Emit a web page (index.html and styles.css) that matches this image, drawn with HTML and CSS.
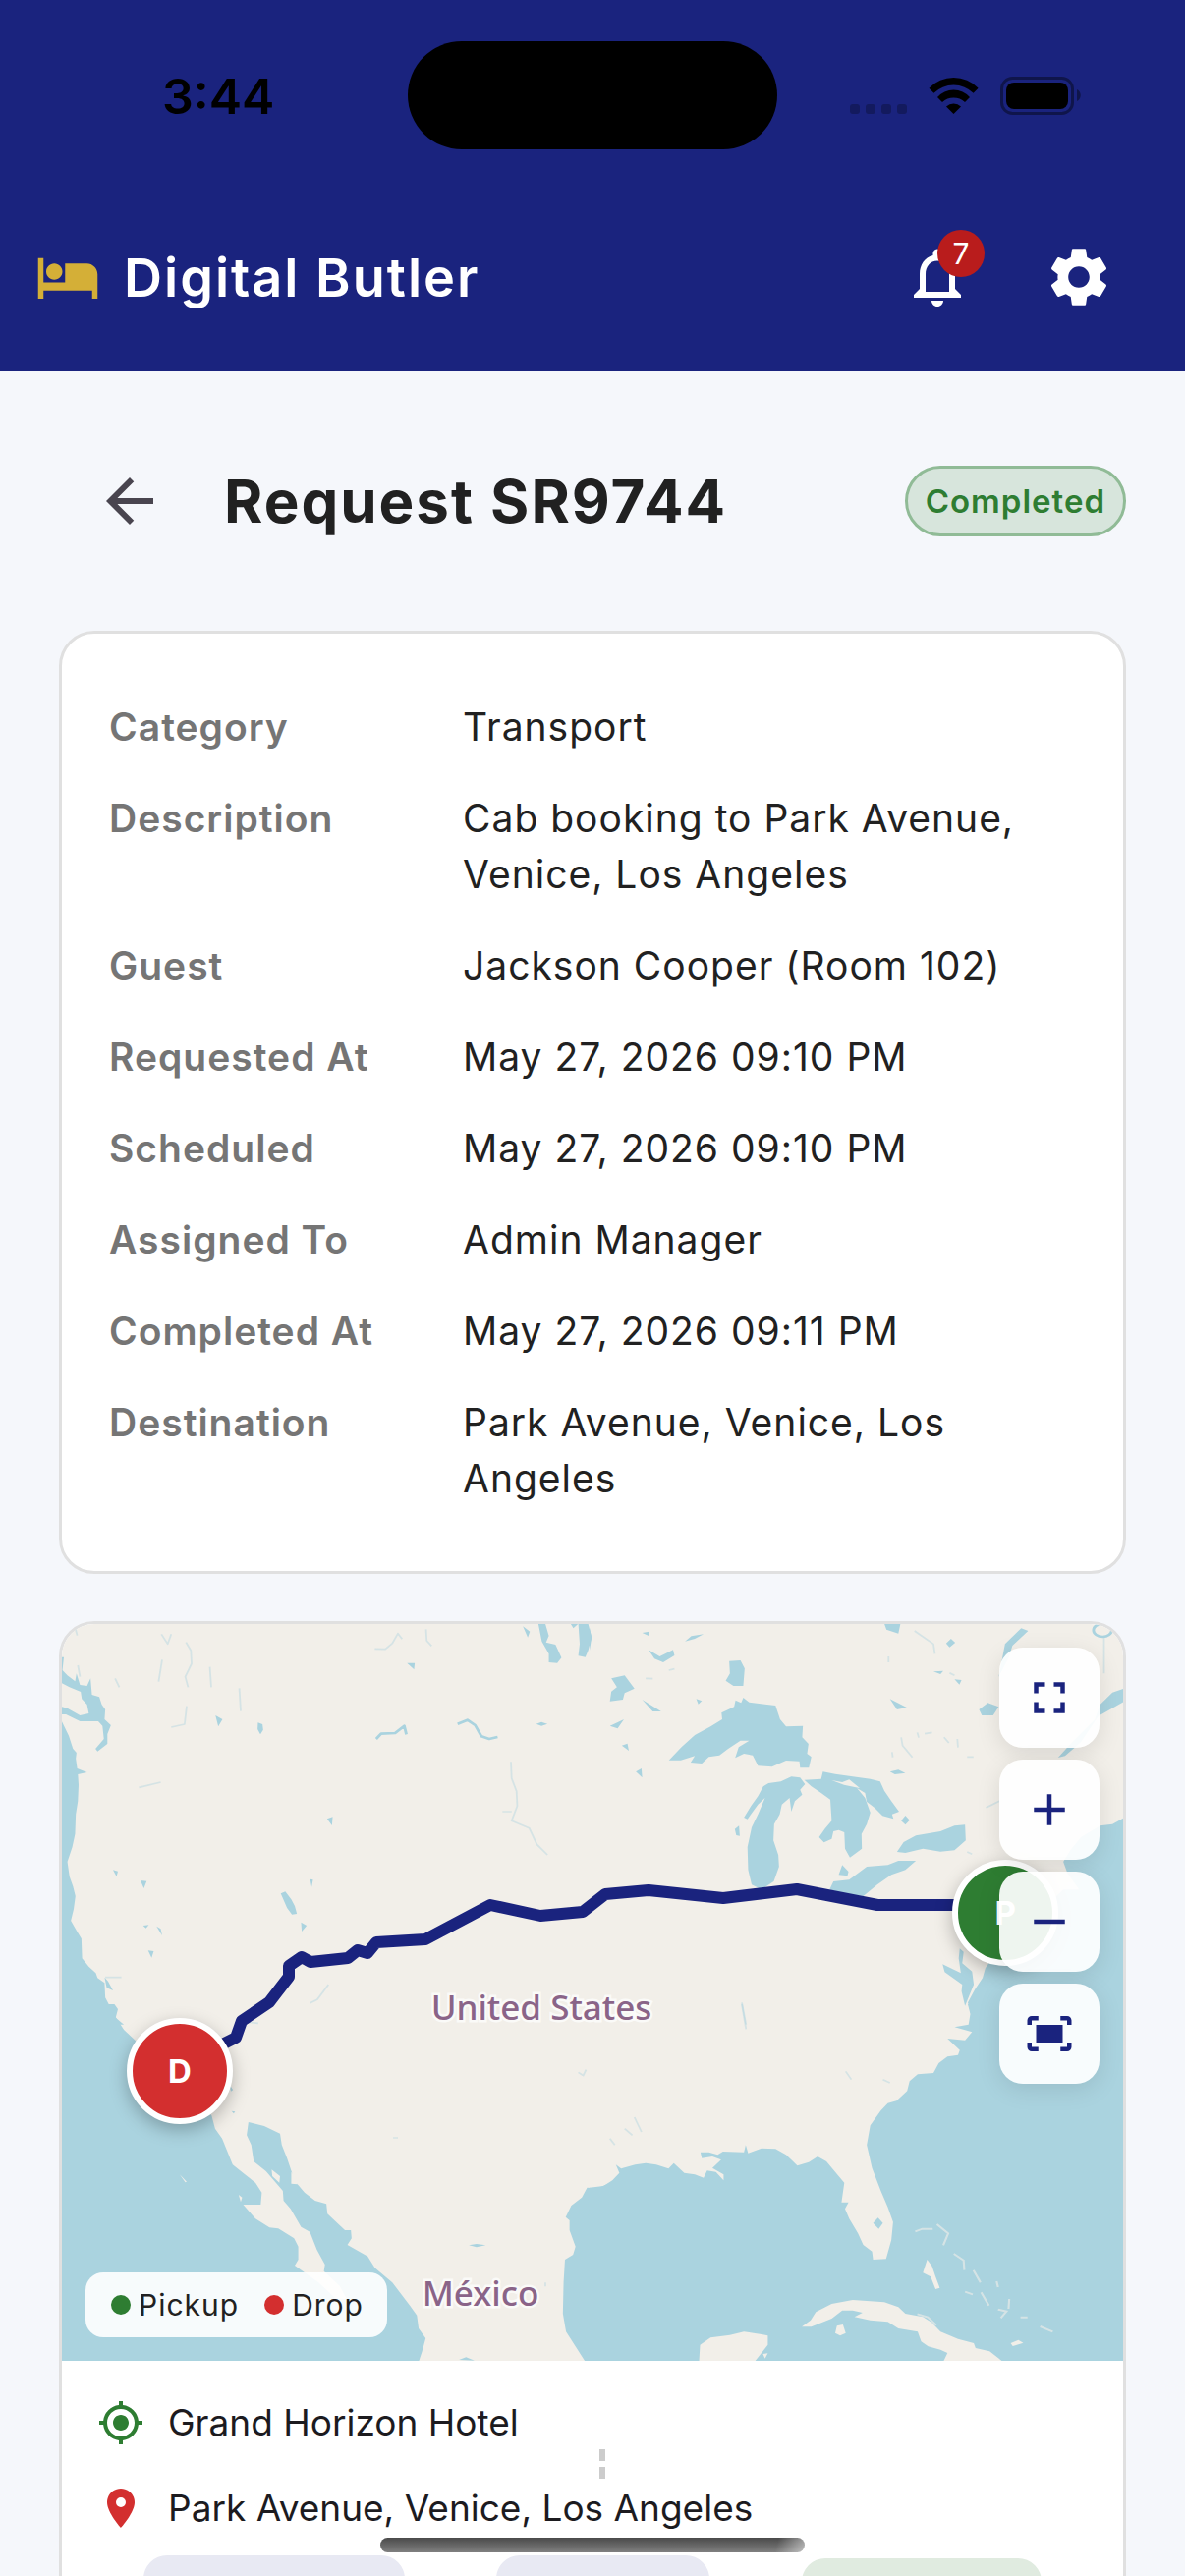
FILE: index.html
```html
<!DOCTYPE html>
<html lang="en">
<head>
  <meta charset="UTF-8" />
  <meta name="viewport" content="width=device-width, initial-scale=1" />
  <title>Digital Butler - Request SR9744</title>
  <link rel="stylesheet" href="styles.css">
</head>
<body>
<header class="top">
  <div class="status-bar">
    <span class="clock">3:44</span>
    <div class="island"></div>
    <svg class="status-icons" viewBox="0 0 236 40" aria-hidden="true">
      <g opacity=".25">
        <rect x="0" y="28" width="10" height="10" rx="3"/>
        <rect x="16" y="28" width="10" height="10" rx="3"/>
        <rect x="32" y="28" width="10" height="10" rx="3"/>
        <rect x="48" y="28" width="10" height="10" rx="3"/>
      </g>
      <path d="M80.5 11.7A34.5 34.5 0 0 1 130.6 11.7L125.6 16.7A29 29 0 0 0 85.4 16.7Z"/>
      <path d="M89 21A22 22 0 0 1 122 21L117 26A17 17 0 0 0 94 26Z"/>
      <path d="M98 30.5A11 11 0 0 1 113 30.5L105.5 38Z"/>
      <rect x="154.500" y="1.500" width="72" height="36" rx="11" fill="none" stroke="#000" stroke-width="3" opacity=".4"/>
      <rect x="159" y="6" width="63" height="27" rx="8"/>
      <path d="M231 13c5 2 5 10 0 12z" opacity=".4"/>
    </svg>
  </div>
  <div class="app-bar">
    <svg class="icon-bed" viewBox="0 0 24 24" aria-hidden="true"><path d="M7 13c1.660 0 3-1.340 3-3S8.660 7 7 7s-3 1.340-3 3 1.340 3 3 3zm12-6h-8v7H3V5H1v15h2v-3h18v3h2v-9c0-2.210-1.790-4-4-4z"/></svg>
    <div class="app-name">Digital Butler</div>
    <button type="button" class="icon-btn" aria-label="Notifications">
      <svg class="icon" viewBox="0 0 24 24"><path d="M12 22c1.100 0 2-.9 2-2h-4c0 1.100.9 2 2 2zm6-6v-5c0-3.070-1.630-5.640-4.500-6.320V4c0-.83-.67-1.500-1.500-1.500s-1.500.67-1.500 1.500v.68C7.640 5.360 6 7.920 6 11v5l-2 2v1h16v-1l-2-2zm-2 1H8v-6c0-2.480 1.510-4.500 4-4.500s4 2.020 4 4.500v6z"/></svg>
      <span class="badge">7</span>
    </button>
    <button type="button" class="icon-btn" aria-label="Settings">
      <svg class="icon" viewBox="0 0 24 24"><path d="M19.140,12.940c0.040-0.300,0.060-0.610,0.060-0.940c0-0.320-0.020-0.640-0.070-0.940l2.030-1.580c0.180-0.140,0.230-0.410,0.120-0.610l-1.920-3.320c-0.120-0.220-0.370-0.290-0.590-0.220l-2.390,0.960c-0.500-0.380-1.030-0.700-1.620-0.940L14.400,2.810c-0.040-0.240-0.240-0.410-0.480-0.410h-3.840c-0.240,0-0.430,0.170-0.470,0.410L9.250,5.350C8.660,5.590,8.120,5.920,7.630,6.290L5.240,5.330c-0.220-0.080-0.470,0-0.590,0.220L2.740,8.870C2.620,9.080,2.660,9.340,2.860,9.480l2.030,1.580C4.840,11.360,4.800,11.690,4.800,12s0.020,0.640,0.070,0.940l-2.030,1.580c-0.180,0.140-0.230,0.410-0.120,0.610l1.920,3.320c0.120,0.220,0.370,0.290,0.590,0.220l2.390-0.960c0.500,0.380,1.030,0.700,1.620,0.940l0.360,2.540c0.050,0.240,0.240,0.410,0.480,0.410h3.840c0.240,0,0.440-0.170,0.470-0.410l0.360-2.540c0.590-0.240,1.130-0.560,1.620-0.940l2.390,0.960c0.220,0.080,0.470,0,0.590-0.220l1.920-3.320c0.120-0.220,0.070-0.470-0.120-0.610L19.140,12.940z M12,15.600c-1.980,0-3.600-1.620-3.600-3.600s1.620-3.600,3.600-3.600s3.600,1.620,3.600,3.600S13.980,15.600,12,15.600z"/></svg>
    </button>
  </div>
</header>

<main class="page">
  <div class="page-head">
    <button type="button" class="back-btn" aria-label="Back">
      <svg class="icon" viewBox="0 0 24 24"><path d="M20 11H7.830l5.590-5.590L12 4l-8 8 8 8 1.410-1.410L7.830 13H20v-2z"/></svg>
    </button>
    <h1 class="page-title">Request SR9744</h1>
    <span class="status-pill">Completed</span>
  </div>

  <!-- Request details -->
  <dl class="card details">
    <div class="detail-row"><dt>Category</dt><dd>Transport</dd></div>
    <div class="detail-row"><dt>Description</dt><dd>Cab booking to Park Avenue, Venice, Los Angeles</dd></div>
    <div class="detail-row"><dt>Guest</dt><dd>Jackson Cooper (Room 102)</dd></div>
    <div class="detail-row"><dt>Requested At</dt><dd>May 27, 2026 09:10 PM</dd></div>
    <div class="detail-row"><dt>Scheduled</dt><dd>May 27, 2026 09:10 PM</dd></div>
    <div class="detail-row"><dt>Assigned To</dt><dd>Admin Manager</dd></div>
    <div class="detail-row"><dt>Completed At</dt><dd>May 27, 2026 09:11 PM</dd></div>
    <div class="detail-row"><dt>Destination</dt><dd>Park Avenue, Venice, Los Angeles</dd></div>
  </dl>

  <!-- Trip map -->
  <section class="card trip">
    <div class="map">
      <svg class="map-art" viewBox="0 0 1080 750" role="img" aria-label="Route map">
        <!-- north west -->
        <g transform="translate(-3 -13) scale(.35714 .33333)">
          <path class="water" d="M0 318L12 345 28 380 40 420 50 432 48 450 52 480 80 492 54 498 56 530 54 580 48 620 46 680 38 720 24 765 30 810 40 840 47 870 42 910 34 945 50 975 64 1000 66 1060 85 1085 105 1105 110 1120 130 1135 132 1180 142 1200 165 1215 160 1240 185 1262H0Z"/>
          <path class="water" d="M0 140L14 140 10 180 24 196 46 214 50 190 60 225 80 228 90 205 94 255 115 262 122 285 132 300 130 330 148 348 138 375 138 405 110 428 104 420 128 390 124 350 112 336 60 336 20 315 0 315V290L24 296 60 318 85 312 80 285 65 268 62 246 30 232 0 215Z"/>
          <path class="water" d="M632 862L645 856 662 880 672 900 678 924 664 926 650 906ZM567 340L580 345 582 362 574 376 566 360ZM446 318L466 330 454 352ZM232 822L250 824 242 846ZM254 1036L270 1038 264 1058ZM278 962L290 970 294 990ZM764 634L780 628 778 654ZM716 818L724 820 720 842ZM154 790L168 794 164 810ZM690 950L706 960 692 978ZM992 158L1014 158 1012 178ZM1360 344L1375 338 1392 344 1375 350ZM240 960L256 958 248 968ZM130 1118L140 1130 154 1158 136 1150Z"/>
          <path class="water" d="M1366 38H1386L1396 75 1388 95 1415 102 1432 142 1420 158 1396 156 1396 130 1376 92ZM1480 38H1508L1518 80 1508 120 1500 140 1480 136 1484 100ZM1322 46L1342 62 1336 80ZM1458 38H1480L1466 52Z"/>
          <path class="creek" d="M904 390L918 374 958 372 984 350 990 376M1136 344L1164 332 1186 348 1204 382 1226 390 1250 384"/>
          <path class="creek faint" d="M1288 460L1290 510 1304 550 1306 595 1290 640 1340 662 1362 712 1392 744M1264 612H1290M362 95L376 120 378 160 360 200 368 232M430 170L434 232M292 70L310 100 320 70M294 148L284 215M514 235L518 305M364 290L358 345 320 354M160 205L172 232M900 115L930 116 950 98 966 68 978 85M1046 55L1048 90 1062 106M228 538L290 522M716 1196L736 1186 754 1160 768 1140M54 165L60 200M132 1118H178M46 50L52 74"/>
        </g>
        <!-- north east -->
        <g transform="translate(537 -13) scale(.35714 .33333)">
          <path class="water" d="M226 455L262 415 300 378 345 352 378 330 376 310 412 292 416 272 432 280 438 264 455 278 500 284 530 288 543 330 560 352 608 350 606 385 624 405 620 435 632 445 625 478 600 478 598 458 560 456 520 475 480 472 465 440 440 435 415 448 425 415 455 395 430 395 395 420 370 440 340 445 320 465 288 462 300 442 260 455Z"/>
          <path class="water" d="M600 508L575 505 545 520 510 525 495 535 480 565 460 595 440 630 450 635 480 590 500 570 480 620 462 660 450 720 452 790 462 835 490 850 525 825 540 780 538 745 524 700 526 650 542 620 548 590 570 570 575 612 585 580 606 560 600 545 614 528Z"/>
          <path class="water" d="M612 515L660 512 665 490 700 497 760 506 800 512 828 520 840 548 860 580 882 612 862 620 866 634 835 625 812 600 790 582 785 555 762 540 785 570 800 615 790 650 775 680 776 725 742 752 728 725 726 675 710 668 695 672 690 695 668 706 654 690 670 665 690 640 686 575 660 555 632 535Z"/>
          <path class="land" d="M690 516L720 522 740 514 770 540 752 536 725 530Z"/>
          <path class="water" d="M684 850L695 825 740 820 790 780 850 775 880 762 930 762 900 790 860 805 820 835 780 870 730 865ZM710 805L720 775 738 795 735 808ZM876 735L895 705 930 685 1000 672 1040 655 1070 652 1072 700 1040 730 1000 734 950 725 900 738ZM398 152L430 150 442 175 438 228 410 228 388 212 400 190ZM888 640L900 624 912 638 900 652ZM414 665L426 655 428 686 418 684Z"/>
          <path class="water" d="M840 38H886L880 68 846 56ZM168 118L200 138 238 118 242 135 210 156 185 145ZM62 205L100 196 128 236 100 250 95 270 58 275 62 245 78 232ZM150 270L204 306 180 306ZM58 350L98 330 80 358ZM132 490L148 480 150 508ZM304 268L320 274 310 284ZM856 268L904 294 876 300ZM856 490L880 484 900 494 870 498ZM92 410L108 404 112 426ZM1016 98L1030 84 1042 96 1026 110ZM1110 300L1135 280 1166 292 1150 318 1118 318ZM980 184L1008 182 1000 192ZM1040 208L1060 210 1054 224ZM0 50L6 80 0 120ZM150 66L170 62 170 76ZM272 92L290 76 325 70 300 84Z"/>
          <path class="water" d="M1525 235L1490 248 1455 285 1440 330 1375 400 1335 447 1355 442 1400 400 1450 320 1525 275ZM1230 52L1250 60 1205 105 1195 140 1166 200 1184 100Z"/>
          <path class="water" d="M1525 630L1490 650 1455 655 1400 690 1370 730 1350 765 1362 800 1395 850 1350 850 1330 870 1200 980 1128 1090 1120 1120 1098 1155 1078 1195 1095 1262H1525Z"/>
          <path class="water" d="M1055 1030L1066 1040 1062 1075 1090 1100 1095 1140 1070 1205 1060 1160 1062 1140 1012 1102 1006 1078 1058 1105 1052 1060Z"/>
          <path class="creek faint" d="M862 430L864 446M888 385L892 410 920 446M934 370L938 386M955 374L976 370M1010 385L1024 402M1048 390L1050 416M1076 445H1094M1130 600L1168 580M1026 188L1040 196M926 60L980 100 984 130M852 138V156M1076 735L1090 742M434 1195L446 1262M160 205L180 206M226 180L242 176M1466 80V190"/>
          <ellipse class="creek" cx="1462" cy="58" rx="26" ry="20"/>
        </g>
        <!-- south west -->
        <g transform="translate(-3 387) scale(.35714 .33333)">
          <path class="water" d="M0 0H158L168 15 162 40 185 78 215 108 300 200 435 340 445 380 465 410 480 450 495 490 530 520 560 545 578 575 575 612 525 612 560 655 600 682 625 685 670 715 682 740 682 780 672 798 740 850 790 900 820 900 800 860 755 815 758 795 735 750 715 695 690 680 660 625 640 600 638 570 590 510 555 480 548 430 535 400 540 360 585 372 630 395 635 430 650 470 672 540 700 575 730 600 762 610 765 640 800 675 815 690 832 690 834 715 822 735 880 770 900 805 950 850 1000 920 1020 950 1025 990 1045 1020 1035 1060 1025 1092H0Z"/>
          <path class="water" d="M1572 545L1535 562 1505 560 1490 590 1460 615 1444 650 1455 660 1455 690 1472 740 1465 765 1442 780 1438 850 1436 945 1445 1000 1475 1050 1500 1092H1572Z"/>
          <path class="land" d="M606 505L630 525 628 545 608 525ZM662 512L676 530 680 550 662 548ZM512 582L522 590 518 604ZM344 520L364 542 360 544Z"/>
          <path class="water" d="M486 245L496 262 490 266ZM1168 736L1190 732 1216 736 1190 742ZM1140 1086L1160 1078 1184 1088ZM492 326L502 328 498 334Z"/>
          <path class="creek faint" d="M1480 208L1494 218 1502 200M530 54L568 58M1386 850V862M952 408H966"/>
        </g>
        <!-- south east -->
        <g transform="translate(537 387) scale(.35714 .33333)">
          <path class="water" d="M0 560L40 555 65 538 85 515 75 490 90 502 130 490 160 485 190 490 225 502 240 485 270 515 300 520 325 530 335 508 360 512 382 538 382 520 350 500 375 475 350 465 320 470 316 452 340 452 365 460 380 450 440 452 445 430 452 455 490 440 530 442 560 460 580 480 592 493 625 482 650 465 675 480 710 525 726 545 718 605 738 605 728 625 740 655 765 700 780 735 805 755 808 780 845 778 860 720 865 665 850 620 830 570 805 500 790 430 800 370 830 325 850 302 875 295 905 265 912 235 935 214 980 210 995 180 1020 160 1050 155 1055 140 1020 105 1070 110 1090 85 1040 70 1080 62 1085 30 1078 0H1525V1092H0Z"/>
          <path class="land" d="M312 1092L315 1040 345 1018 400 1010 440 1000 490 1008 508 1012 508 1040 490 1065 470 1092ZM632 985L605 985 630 965 645 940 690 915 750 903 840 910 880 925 900 945 950 955 975 972 1000 1000 1050 1022 1095 1035 1100 1050 1140 1060 1178 1092H1008L1020 1065 1000 1055 965 1045 945 1030 935 1000 880 990 850 970 800 965 755 955 778 942 750 935 720 935 690 960ZM705 982L722 978 730 1004 714 1012 700 1004ZM962 780L976 800 986 832 998 866 986 870 972 832 950 820ZM1200 1035L1222 1025 1236 1034 1206 1044ZM494 1068L508 1066 500 1082Z"/>
          <path class="isle" d="M928 694L948 686H978M990 672L1022 700 1008 736M934 946L964 956 988 980M1038 762L1066 782 1068 812M1094 812L1114 850M1070 878L1092 886M1116 880L1138 920M1164 932L1188 938 1172 958M1284 984L1320 1000M1228 956H1248M1160 846L1164 864M1196 900L1194 930"/>
          <path class="water" d="M822 652L836 668 824 686 808 668Z"/>
          <path class="creek faint" d="M434 0L446 76M128 345L148 390M100 380L122 400M58 410L72 430M730 205L746 230M836 230L856 240"/>
        </g>
        <text class="country" x="488" y="403">United States</text>
        <text class="country" x="426" y="694">México</text>
        <path class="route" d="M120 455L165 427 177 421 183 404 211 385 231 359 231 348 244 339 253 344 291 340 301 332 311 335 320 324 370 321 436 286 487 297 530 293 553 275 597 271 673 279 748 270 830 286 908 286 960 288"/>
      </svg>
      <span class="marker marker-drop">D</span>
      <span class="marker marker-pickup">P</span>
      <div class="legend">
        <span class="legend-item"><i class="dot dot-pickup"></i>Pickup</span>
        <span class="legend-item"><i class="dot dot-drop"></i>Drop</span>
      </div>
      <div class="map-controls">
        <button type="button" class="map-btn" aria-label="Full screen"><svg viewBox="0 0 24 24"><path d="M7 14H5v5h5v-2H7v-3zm-2-4h2V7h3V5H5v5zm12 7h-3v2h5v-5h-2v3zM14 5v2h3v3h2V5h-5z"/></svg></button>
        <button type="button" class="map-btn" aria-label="Zoom in"><svg viewBox="0 0 24 24"><path d="M19 13h-6v6h-2v-6H5v-2h6V5h2v6h6v2z"/></svg></button>
        <button type="button" class="map-btn" aria-label="Zoom out"><svg viewBox="0 0 24 24"><path d="M19 13H5v-2h14v2z"/></svg></button>
        <button type="button" class="map-btn" aria-label="Fit route"><svg viewBox="0 0 24 24"><path d="M17 4h3c1.100 0 2 .9 2 2v2h-2V6h-3V4zM4 8V6h3V4H4c-1.100 0-2 .9-2 2v2h2zm16 8v2h-3v2h3c1.100 0 2-.9 2-2v-2h-2zM7 18H4v-2H2v2c0 1.100.9 2 2 2h3v-2zM18 8H6v8h12V8z"/></svg></button>
      </div>
    </div>
    <div class="stops">
      <div class="stop">
        <svg class="stop-icon from" viewBox="0 0 24 24" aria-hidden="true"><path d="M12 8c-2.210 0-4 1.790-4 4s1.790 4 4 4 4-1.790 4-4-1.790-4-4-4zm8.940 3A8.994 8.994 0 0 0 13 3.060V1h-2v2.060A8.994 8.994 0 0 0 3.060 11H1v2h2.060A8.994 8.994 0 0 0 11 20.940V23h2v-2.060A8.994 8.994 0 0 0 20.940 13H23v-2h-2.060zM12 19c-3.870 0-7-3.130-7-7s3.130-7 7-7 7 3.130 7 7-3.130 7-7 7z"/></svg>
        <span>Grand Horizon Hotel</span>
      </div>
      <div class="stop-dashes"><i></i><i></i></div>
      <div class="stop">
        <svg class="stop-icon to" viewBox="0 0 24 24" aria-hidden="true"><path d="M12 2C8.130 2 5 5.130 5 9c0 5.250 7 13 7 13s7-7.750 7-13c0-3.870-3.130-7-7-7zm0 9.500a2.500 2.500 0 0 1 0-5 2.500 2.500 0 0 1 0 5z"/></svg>
        <span>Park Avenue, Venice, Los Angeles</span>
      </div>
      <div class="chips">
        <div class="chip chip-distance"></div>
        <div class="chip chip-time"></div>
        <div class="chip chip-state"></div>
      </div>
    </div>
  </section>
</main>
<div class="home-bar"></div>
</body>
</html>
```

FILE: styles.css
```css
* {
  box-sizing: border-box;
}
html, body {
  margin: 0;
  padding: 0;
  height: 100%;
}
body {
  background: #f5f7fb;
  font-family: Inter, "Liberation Sans", sans-serif;
  font-size: 39px;
  line-height: 57px;
  color: #212121;
  overflow: hidden;
}
button {
  border: none;
  background: none;
  padding: 0;
  cursor: pointer;
}
svg {
  display: block;
  fill: currentColor;
}

/* Header */
.top {
  background: #1a237e;
  color: #fff;
}
.status-bar {
  position: relative;
  display: flex;
  align-items: center;
  justify-content: space-between;
  height: 186px;
  padding: 10px 105px 0 165px;
  color: #000;
}
.clock {
  font-size: 50px;
  font-weight: 600;
}
.island {
  position: absolute;
  top: 42px;
  left: 50%;
  width: 376px;
  height: 110px;
  margin-left: -188px;
  border-radius: 55px;
  background: #000;
}
.status-icons {
  width: 236px;
  height: 40px;
}
.app-bar {
  display: flex;
  align-items: center;
  height: 192px;
  padding: 0 36px;
}
.icon-bed {
  width: 66px;
  height: 66px;
  color: #d4af37;
}
.app-name {
  flex: 1;
  margin-left: 24px;
  font-size: 54px;
  font-weight: 600;
  letter-spacing: 2px;
}
.icon {
  width: 72px;
  height: 72px;
}
.icon-btn {
  position: relative;
  display: flex;
  align-items: center;
  justify-content: center;
  width: 144px;
  height: 144px;
  color: #fff;
}
.badge {
  position: absolute;
  top: 24px;
  right: 24px;
  width: 48px;
  height: 48px;
  border-radius: 50%;
  background: #b91c1c;
  font: 30px/48px Inter, sans-serif;
  text-align: center;
}

/* Page */
.page {
  padding: 60px;
}
.page-head {
  display: flex;
  align-items: center;
  height: 144px;
  margin-bottom: 60px;
}
.back-btn {
  display: flex;
  align-items: center;
  justify-content: center;
  width: 144px;
  height: 144px;
  color: #49454f;
}
.page-title {
  flex: 1;
  margin: 0 0 0 24px;
  font-size: 60px;
  line-height: 72px;
  font-weight: 700;
  letter-spacing: 2px;
}
.status-pill {
  padding: 0 18px;
  border: 3px solid #90bb96;
  border-radius: 36px;
  background: #d7e5dc;
  color: #2e7d32;
  font-size: 33px;
  line-height: 66px;
  font-weight: 600;
  letter-spacing: 1px;
}
.card {
  margin: 0 0 48px;
  border: 3px solid #e0e0e0;
  border-radius: 36px;
  background: #fff;
}
.details {
  padding: 48px;
  letter-spacing: 1px;
}
.detail-row {
  display: flex;
  padding: 18px 0;
}
.detail-row dt {
  flex: 0 0 360px;
  color: #757575;
  font-weight: 600;
}
.detail-row dd {
  margin: 0;
}

/* Map */
.trip {
  overflow: hidden;
}
.map {
  position: relative;
  background: #f2efe9;
}
.map-art {
  width: 100%;
  height: auto;
}
.water {
  fill: #aad3df;
}
.land {
  fill: #f2efe9;
}
.creek {
  fill: none;
  stroke: #aad3df;
  stroke-width: 8;
  stroke-linejoin: round;
}
.faint {
  stroke-width: 5;
  opacity: .4;
}
.isle {
  fill: none;
  stroke: #f2efe9;
  stroke-width: 6;
  opacity: .6;
}
.country {
  fill: #8a6488;
  stroke: #fff;
  stroke-width: 5px;
  stroke-opacity: .7;
  paint-order: stroke;
  font-family: "Noto Sans", sans-serif;
  font-size: 35px;
  font-weight: 500;
  text-anchor: middle;
}
.route {
  fill: none;
  stroke: #1a237e;
  stroke-width: 12;
  stroke-linejoin: round;
}
.marker {
  position: absolute;
  width: 108px;
  height: 108px;
  margin: -54px 0 0 -54px;
  border: 6px solid #fff;
  border-radius: 50%;
  box-shadow: 0 6px 18px rgba(0, 0, 0, 0.26);
  color: #fff;
  font-size: 33px;
  line-height: 96px;
  font-weight: 700;
  text-align: center;
}
.marker-drop {
  left: 11.1%;
  top: 60.7%;
  background: #d32f2f;
}
.marker-pickup {
  left: 88.9%;
  top: 39.2%;
  background: #2e7d32;
}
.legend {
  position: absolute;
  left: 24px;
  bottom: 24px;
  display: flex;
  gap: 24px;
  padding: 0 24px;
  border-radius: 18px;
  background: rgba(255, 255, 255, 0.9);
  font-size: 30px;
  line-height: 66px;
  letter-spacing: 1px;
}
.legend-item {
  display: flex;
  align-items: center;
}
.dot {
  width: 20px;
  height: 20px;
  margin: 0 8px 0 2px;
  border-radius: 50%;
}
.dot-pickup {
  background: #2e7d32;
}
.dot-drop {
  background: #d32f2f;
}
.map-controls {
  position: absolute;
  top: 24px;
  right: 24px;
  display: flex;
  flex-direction: column;
  gap: 12px;
}
.map-btn {
  display: flex;
  align-items: center;
  justify-content: center;
  width: 102px;
  height: 102px;
  border-radius: 24px;
  background: rgba(255, 255, 255, 0.92);
  box-shadow: 0 6px 24px rgba(0, 0, 0, 0.1);
  color: #1a237e;
}
.map-btn svg {
  width: 54px;
  height: 54px;
}

/* Stops */
.stops {
  padding: 36px;
}
.stop {
  display: flex;
  align-items: center;
  gap: 24px;
  font-size: 37px;
  line-height: 54px;
  color: #1c1b1f;
}
.stop-icon {
  width: 48px;
  height: 48px;
}
.from {
  color: #2e7d32;
}
.to {
  color: #d32f2f;
}
.stop-dashes {
  display: flex;
  flex-direction: column;
  align-items: center;
  gap: 6px;
  padding: 0 0 3px 20px;
}
.stop-dashes i {
  width: 6px;
  height: 12px;
  background: #ccc;
}
.chips {
  display: flex;
  align-items: center;
  justify-content: space-around;
  margin-top: 21px;
}
.chip {
  height: 90px;
  border-radius: 24px;
  background: #e8e9f3;
}
.chip-distance {
  width: 266px;
}
.chip-time {
  width: 217px;
}
.chip-state {
  width: 244px;
  height: 84px;
  background: #e0ebe0;
}
.home-bar {
  position: fixed;
  left: 50%;
  bottom: 24px;
  width: 432px;
  height: 15px;
  margin-left: -216px;
  border-radius: 8px;
  background: linear-gradient(105deg, transparent 93%, rgba(255, 255, 255, 0.5)), linear-gradient(#4a4a4a, #808080);
}
```
